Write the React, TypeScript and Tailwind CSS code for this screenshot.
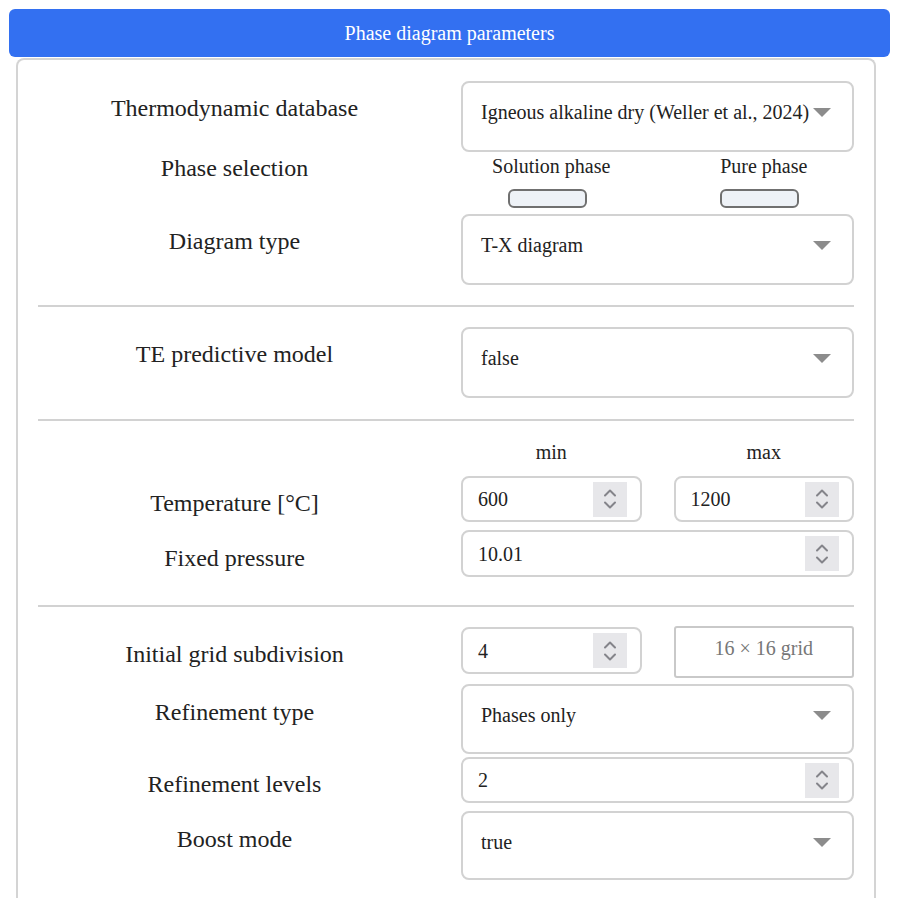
import React from 'react'

const serif = "font-['Liberation_Serif','Times_New_Roman',serif]"

function Arrow() {
  return (
    <svg width="18" height="9" viewBox="0 0 18 9" className="shrink-0">
      <path d="M0 0 H18 L9 9 Z" fill="#8c8c8c" />
    </svg>
  )
}

function Spinner() {
  return (
    <div className="flex h-[35px] w-[34px] shrink-0 items-center justify-center bg-[#e7e7ea]">
      <svg width="14" height="24" viewBox="0 0 14 24">
        <path d="M2 8.5 L7 3.5 L12 8.5" fill="none" stroke="#84848a" strokeWidth="2" strokeLinecap="round" strokeLinejoin="round" />
        <path d="M2 15.5 L7 20.5 L12 15.5" fill="none" stroke="#84848a" strokeWidth="2" strokeLinecap="round" strokeLinejoin="round" />
      </svg>
    </div>
  )
}

function Select({ value, h = 'h-[71px]' }: { value: string; h?: string }) {
  return (
    <div className={`${h} rounded-[8px] border-2 border-[#d2d2d2] bg-white pl-[18px] pr-[21px] pt-[17px]`}>
      <div className="flex items-center justify-between gap-[4px]">
        <span className="whitespace-nowrap text-[20px] leading-[24px] text-[#222]">{value}</span>
        <Arrow />
      </div>
    </div>
  )
}

function NumInput({ value, h = 'h-[46px]' }: { value: string; h?: string }) {
  return (
    <div className={`${h} flex items-center justify-between rounded-[8px] border-2 border-[#d2d2d2] bg-white pl-[15px] pr-[13px]`}>
      <span className="text-[20px] leading-[24px] text-[#222]">{value}</span>
      <Spinner />
    </div>
  )
}

function Label({ children, pt = 'pt-[13px]' }: { children: React.ReactNode; pt?: string }) {
  return <div className={`${pt} text-center text-[24px] leading-[28px] text-[#222]`}>{children}</div>
}

function Row({ label, children, className = '', pt }: { label: string; children: React.ReactNode; className?: string; pt?: string }) {
  return (
    <div className={`grid grid-cols-[393px_393px] gap-x-[30px] ${className}`}>
      <Label pt={pt}>{label}</Label>
      <div>{children}</div>
    </div>
  )
}

function Toggle() {
  return <div className="mr-[8px] h-[19px] w-[79px] rounded-[6px] border-2 border-[#707070] bg-[#eef2f7]" />
}

function Separator({ className }: { className: string }) {
  return <div className={`h-[2px] bg-[#d2d2d2] ${className}`} />
}

export default function App() {
  return (
    <div className={`min-h-[898px] overflow-hidden bg-white pt-[9px] ${serif}`}>
      <div className="ml-[9px] flex h-[48px] w-[881px] items-center justify-center rounded-[6px] bg-[#3370f1] text-[20px] text-white">
        Phase diagram parameters
      </div>

      <div className="ml-[16px] mt-[1px] h-[900px] w-[860px] rounded-t-[8px] border-2 border-b-0 border-[#d4d4d4] px-[20px] pt-[21px]">
        <Row label="Thermodynamic database">
          <Select value="Igneous alkaline dry (Weller et al., 2024)" />
        </Row>

        <Row label="Phase selection" className="h-[62px]" pt="pt-[2px]">
          <div className="grid grid-cols-2 gap-x-[32px] pt-[2px] text-[20px] leading-[24px] text-[#222]">
            <div className="flex flex-col items-center">
              <span>Solution phase</span>
              <div className="mt-[11px]">
                <Toggle />
              </div>
            </div>
            <div className="flex flex-col items-center">
              <span>Pure phase</span>
              <div className="mt-[11px]">
                <Toggle />
              </div>
            </div>
          </div>
        </Row>

        <Row label="Diagram type">
          <Select value="T-X diagram" />
        </Row>

        <Separator className="mt-[20px]" />

        <Row label="TE predictive model" className="mt-[20px]">
          <Select value="false" />
        </Row>

        <Separator className="mt-[21px]" />

        <div className="mt-[19px] grid grid-cols-[393px_393px] gap-x-[30px]">
          <div />
          <div className="grid grid-cols-2 gap-x-[32px] text-center text-[20px] leading-[24px] text-[#222]">
            <span>min</span>
            <span>max</span>
          </div>
        </div>

        <Row label="Temperature [°C]" className="mt-[12px]">
          <div className="grid grid-cols-2 gap-x-[32px]">
            <NumInput value="600" />
            <NumInput value="1200" />
          </div>
        </Row>

        <Row label="Fixed pressure" className="mt-[8px]" pt="pt-[14px]">
          <NumInput value="10.01" h="h-[47px]" />
        </Row>

        <Separator className="mt-[28px]" />

        <Row label="Initial grid subdivision" className="mt-[19px]" pt="pt-[14px]">
          <div className="grid grid-cols-2 items-start gap-x-[32px]">
            <div className="pt-[1px]">
              <NumInput value="4" h="h-[47px]" />
            </div>
            <div className="flex h-[52px] justify-center rounded-[3px] border-2 border-[#c9c9c9] pt-[8px] text-[20px] leading-[24px] text-[#777]">
              16 × 16 grid
            </div>
          </div>
        </Row>

        <Row label="Refinement type" className="mt-[6px]" pt="pt-[14px]">
          <Select value="Phases only" h="h-[70px]" />
        </Row>

        <Row label="Refinement levels" className="mt-[3px]">
          <NumInput value="2" />
        </Row>

        <Row label="Boost mode" className="mt-[8px]" pt="pt-[14px]">
          <Select value="true" h="h-[69px]" />
        </Row>
      </div>
    </div>
  )
}
